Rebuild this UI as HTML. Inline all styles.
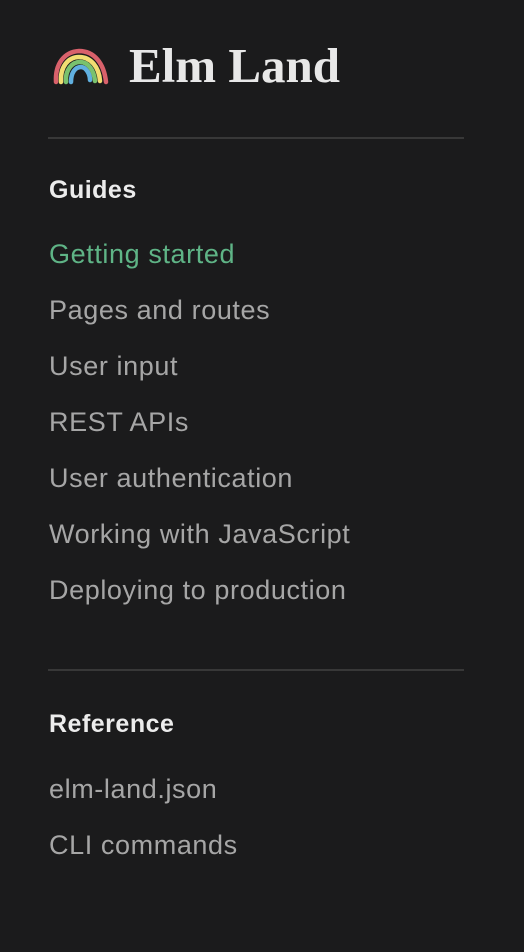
<!DOCTYPE html>
<html><head><style>
html,body{margin:0;background:#1b1b1c;width:524px;height:952px;overflow:hidden}
body{position:relative;font-family:"Liberation Sans",sans-serif}
.t{position:absolute;left:49px;white-space:nowrap;line-height:30px;font-size:27px;letter-spacing:0.6px;color:#a6a6a6}
.h{color:#ececec;font-weight:bold;font-size:25px;letter-spacing:0.5px}
.g{color:#5fb486}
.line{position:absolute;left:48px;width:416px;height:2px;background:#383838}
.logo{position:absolute;left:129px;top:36px;font-family:"Liberation Serif",serif;font-weight:bold;font-size:49px;color:#e8e8e8;line-height:60px}
</style></head><body>
<svg style="position:absolute;left:52px;top:46px" width="58" height="40" viewBox="0 0 58 40" fill="none" stroke-linecap="round">
<path d="M4 36 C3 18 12 6 27 5 C42 5 52 17 54 36" stroke="#d9616b" stroke-width="4.5"/>
<path d="M9 36 C8 21 16 11 27 11 C39 11 47 21 48 35" stroke="#f1de72" stroke-width="4.5"/>
<path d="M14 36 C13 24 20 16 28 16 C36 16 42 24 43 35" stroke="#79c26e" stroke-width="4.5"/>
<path d="M19 36 C19 27 23 21 29 21 C34 21 38 28 38 34" stroke="#60b0e0" stroke-width="4.5"/>
</svg>
<div class="logo">Elm Land</div>
<div class="line" style="top:137px"></div>
<div class="t h" style="top:175px">Guides</div>
<div class="t g" style="top:239px">Getting started</div>
<div class="t" style="top:295px">Pages and routes</div>
<div class="t" style="top:351px">User input</div>
<div class="t" style="top:407px">REST APIs</div>
<div class="t" style="top:463px">User authentication</div>
<div class="t" style="top:519px">Working with JavaScript</div>
<div class="t" style="top:575px">Deploying to production</div>
<div class="line" style="top:669px"></div>
<div class="t h" style="top:709px">Reference</div>
<div class="t" style="top:774px">elm-land.json</div>
<div class="t" style="top:830px">CLI commands</div>
</body></html>
